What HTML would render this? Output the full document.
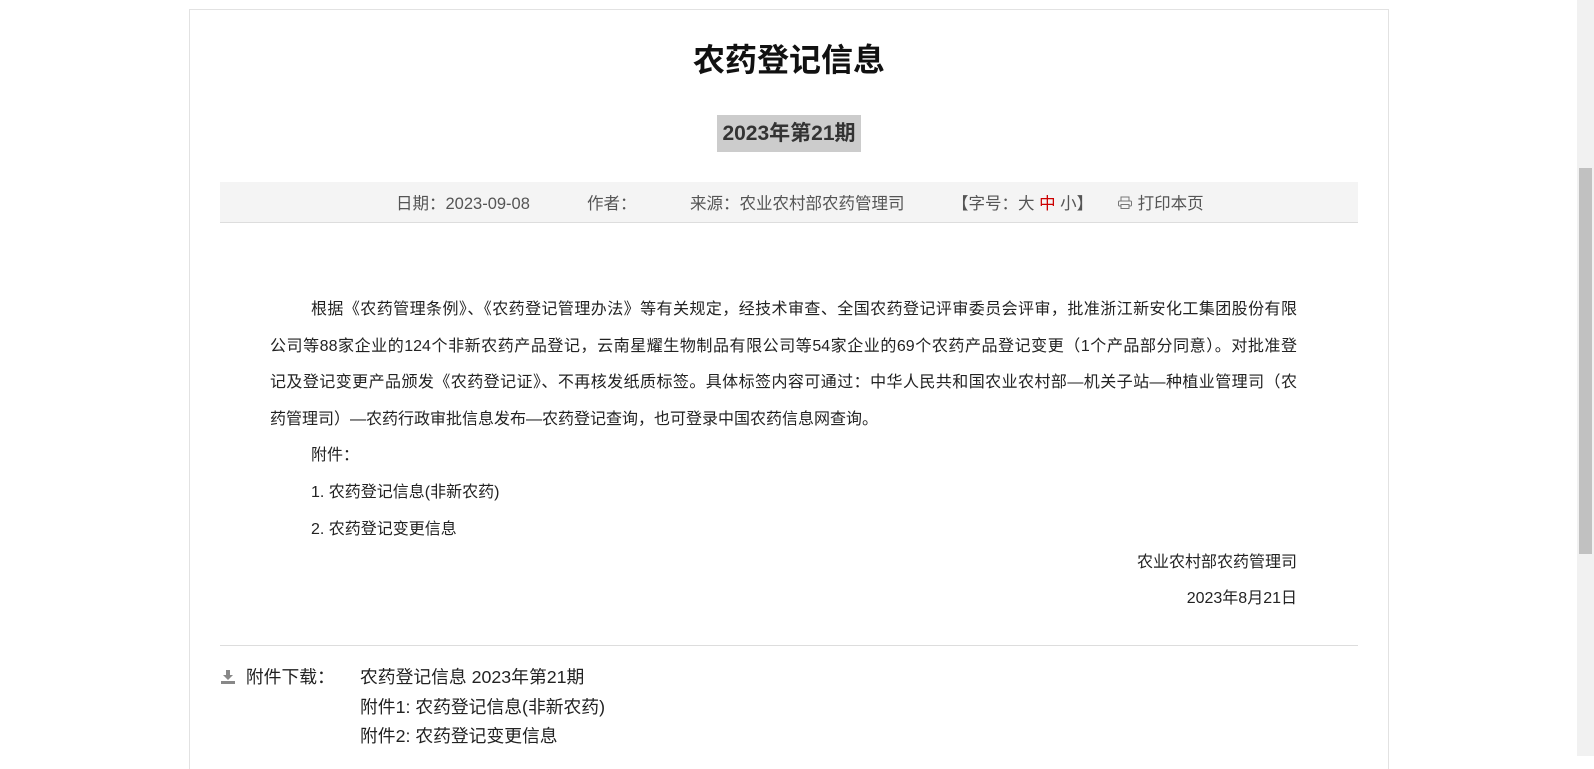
<!DOCTYPE html>
<html><head><meta charset="utf-8"><style>
*{margin:0;padding:0;box-sizing:border-box}
body{width:1594px;height:756px;overflow:hidden;background:#fff;font-family:"Liberation Sans","Noto Sans CJK SC",sans-serif;color:#222;position:relative}
.a{position:absolute;white-space:nowrap}
.box{position:absolute;left:189px;top:9px;width:1200px;height:760px;border:1px solid #e2e2e2;border-bottom:none}
.meta{position:absolute;left:220px;top:182px;width:1138px;height:41px;background:#f4f4f4;border-bottom:1px solid #ddd}
.m{position:absolute;top:194px;font-size:16.5px;line-height:20px;color:#555;white-space:nowrap}
.p{position:absolute;left:270px;width:1027px;font-size:16px;line-height:36.6px;color:#222;top:292px}
.p div{white-space:nowrap;text-align-last:justify;text-align:justify}
.p div.l{text-align-last:left}
.r{position:absolute;right:297px;font-size:16px;line-height:20px}
.att{position:absolute;font-size:17.8px;line-height:29.5px;color:#222;white-space:nowrap;top:663px}
.sb{position:absolute;left:1577px;top:0;width:17px;height:756px;background:#f1f1f1}
.th{position:absolute;left:1579px;top:168px;width:13px;height:386px;background:#c1c1c1}
</style></head><body>
<div class="box"></div>
<div class="a" style="left:0;width:1578px;top:40px;text-align:center;font-size:32px;line-height:40px;font-weight:bold;color:#111">农药登记信息</div>
<div class="a" style="left:717px;top:115px;width:144px;height:37px;background:#ccc;text-align:center;font-size:21px;line-height:38px;font-weight:bold;color:#333">2023年第21期</div>
<div class="meta"></div>
<div class="m" style="left:396px">日期：2023-09-08</div>
<div class="m" style="left:587px">作者：</div>
<div class="m" style="left:690px">来源：农业农村部农药管理司</div>
<div class="m" style="left:952px">【字号：大 <span style="color:#c00">中</span> 小】</div>
<div class="m" style="left:1117px"><svg width="16" height="14" viewBox="0 0 16 14" style="vertical-align:-1px"><rect x="4" y="1" width="8" height="4" fill="none" stroke="#777"/><rect x="1.5" y="5" width="13" height="5" rx="1" fill="none" stroke="#777"/><rect x="4" y="8.5" width="8" height="4" fill="#f4f4f4" stroke="#777"/></svg> 打印本页</div>
<div class="p">
<div style="padding-left:41px">根据《农药管理条例》、《农药登记管理办法》等有关规定，经技术审查、全国农药登记评审委员会评审，批准浙江新安化工集团股份有限</div>
<div>公司等88家企业的124个非新农药产品登记，云南星耀生物制品有限公司等54家企业的69个农药产品登记变更（1个产品部分同意）。对批准登</div>
<div>记及登记变更产品颁发《农药登记证》、不再核发纸质标签。具体标签内容可通过：中华人民共和国农业农村部—机关子站—种植业管理司（农</div>
<div class="l">药管理司）—农药行政审批信息发布—农药登记查询，也可登录中国农药信息网查询。</div>
<div class="l" style="padding-left:41px">附件：</div>
<div class="l" style="padding-left:41px">1. 农药登记信息(非新农药)</div>
<div class="l" style="padding-left:41px">2. 农药登记变更信息</div>
</div>
<div class="r" style="top:553px">农业农村部农药管理司</div>
<div class="r" style="top:589px">2023年8月21日</div>
<div class="a" style="left:220px;top:645px;width:1138px;border-top:1px solid #ddd"></div>
<div class="att" style="left:220px"><svg width="16" height="16" viewBox="0 0 16 16" style="vertical-align:-2px"><path d="M6 1h4v5h3l-5 5-5-5h3z" fill="#888"/><rect x="1" y="12" width="14" height="3" fill="#888"/></svg>&nbsp; 附件下载：</div>
<div class="att" style="left:360px">农药登记信息 2023年第21期<br>附件1: 农药登记信息(非新农药)<br>附件2: 农药登记变更信息</div>
<div class="sb"></div><div class="th"></div>
</body></html>
